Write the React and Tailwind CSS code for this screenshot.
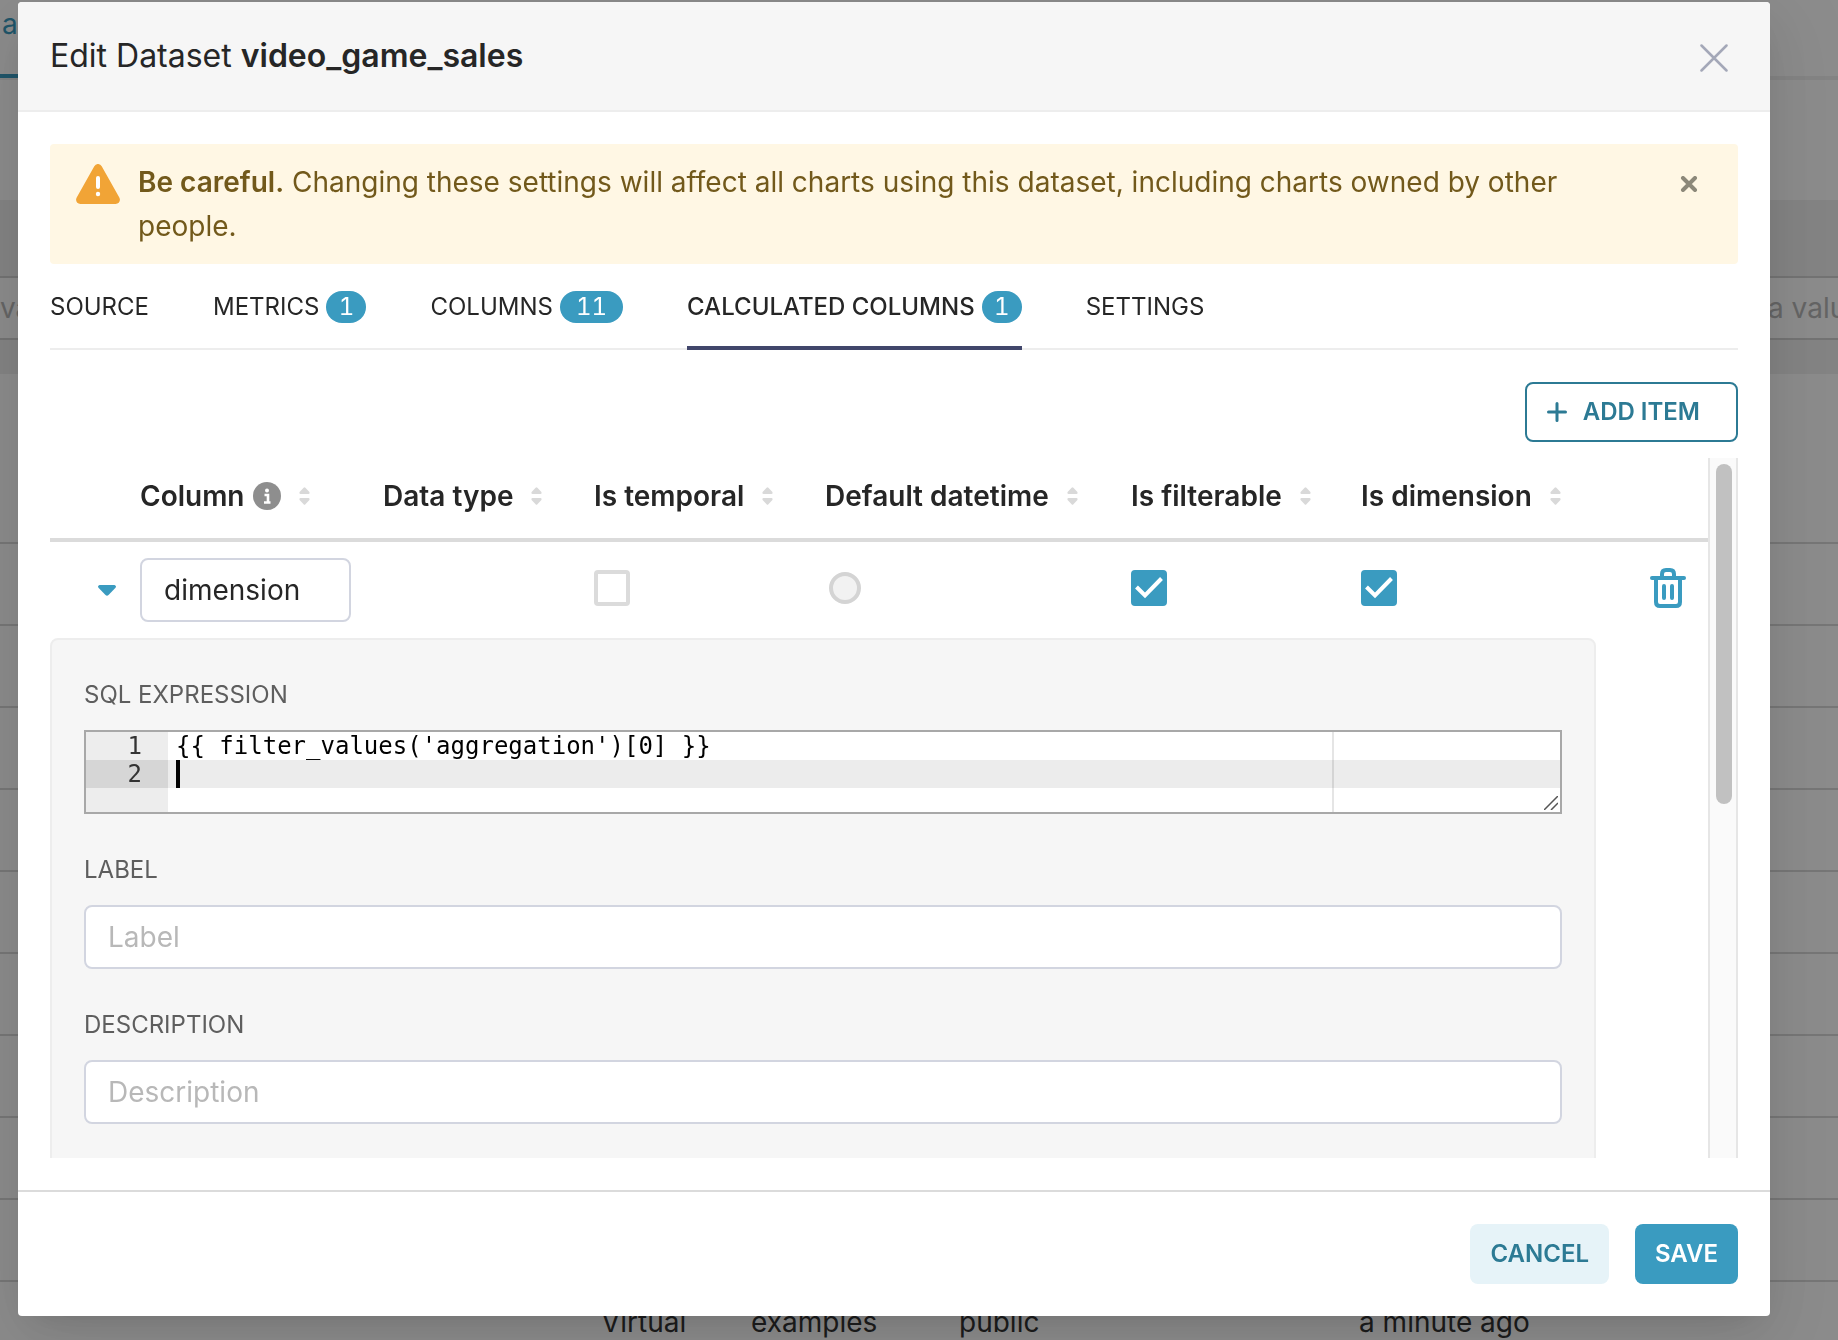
import React, { useState } from 'react';

const TABS = [
  { key: 'source', label: 'SOURCE' },
  { key: 'metrics', label: 'METRICS', count: 1 },
  { key: 'columns', label: 'COLUMNS', count: 11 },
  { key: 'calculated', label: 'CALCULATED COLUMNS', count: 1 },
  { key: 'settings', label: 'SETTINGS' },
];

const HEADERS = [
  { label: 'Column', info: true },
  { label: 'Data type' },
  { label: 'Is temporal' },
  { label: 'Default datetime' },
  { label: 'Is filterable' },
  { label: 'Is dimension' },
];

const SQL = "{{ filter_values('aggregation')[0] }}\n";

function SortIcon() {
  return (
    <svg width="11" height="18" viewBox="0 0 11 18" fill="#d9d9d9" aria-hidden="true">
      <path d="M4.6.7Q5.5-.3 6.4.7L10.4 5Q11 7 9.5 7H1.5Q0 7 .6 5Z" />
      <path d="M4.6 17.3Q5.5 18.3 6.4 17.3L10.4 13Q11 11 9.5 11H1.5Q0 11 .6 13Z" />
    </svg>
  );
}

function InfoIcon() {
  return (
    <svg width="28" height="28" viewBox="0 0 28 28" aria-hidden="true">
      <circle cx="14" cy="14" r="14" fill="#8e8e8e" />
      <circle cx="14" cy="8.5" r="2" fill="#fff" />
      <path d="M11.5 13h3.5v7M11 20.500h6.5" stroke="#fff" strokeWidth="2.6" fill="none" />
    </svg>
  );
}

function WarningIcon() {
  return (
    <svg className="mt-1 shrink-0" width="44" height="40" viewBox="0 0 44 40" aria-hidden="true">
      <path
        d="M18.3 2.200a4.200 4.200 0 0 1 7.400 0l17.600 31.300c1.700 3-.2 6.500-3.700 6.500H4.400C.9 40-1 36.500.7 33.500Z"
        fill="#f1a436"
      />
      <path d="M22 14v9" stroke="#fff" strokeWidth="4" strokeLinecap="round" />
      <circle cx="22" cy="30" r="2.2" fill="#fff" />
    </svg>
  );
}

function TrashIcon() {
  return (
    <svg width="36" height="40" viewBox="0 0 36 40" fill="none" stroke="#3a9bc0" strokeWidth="4" strokeLinecap="round" aria-hidden="true">
      <path d="M2 10h32" />
      <path d="M12 9V6q0-4 4-4h4q4 0 4 4v3" />
      <path d="M6 11v23q0 4 4 4h16q4 0 4-4V11" />
      <path d="M14 18v12M22 18v12" />
    </svg>
  );
}

function Checkbox({ label, checked, onChange }) {
  return (
    <span className="grid w-9">
      <input
        type="checkbox"
        aria-label={label}
        checked={checked}
        onChange={e => onChange(e.target.checked)}
        className="peer col-start-1 row-start-1 size-9 appearance-none rounded-[4px] border-4 border-[#dbdbdb] bg-white checked:border-[#3a9bc0] checked:bg-[#3a9bc0]"
      />
      <svg className="pointer-events-none col-start-1 row-start-1 hidden peer-checked:block" width="36" height="36" viewBox="0 0 36 36" aria-hidden="true">
        <path d="M5.500 17l8.500 8.500L30.500 8.500" fill="none" stroke="#fff" strokeWidth="4" />
      </svg>
    </span>
  );
}

function Field({ id, label, children }) {
  return (
    <div>
      <label htmlFor={id} className="mb-[17px] block text-2xl leading-9 text-[#5e5e5e]">
        {label}
      </label>
      {children}
    </div>
  );
}

function SqlEditor({ id }) {
  const [value, setValue] = useState(SQL);

  return (
    <div className="flex h-[84px] border-2 border-[#a8a8a8] bg-white font-['DejaVu_Sans_Mono',monospace] text-2xl leading-7">
      <div className="w-[82px] shrink-0 bg-[#ededed] text-right text-[#333]">
        <div className="pr-[26px]">1</div>
        <div className="bg-[#d6d6d6] pr-[26px]">2</div>
      </div>
      <div className="relative grid flex-1">
        <div className="col-start-1 row-start-1 pt-7">
          <div className="h-7 bg-[#ececec] pl-2">
            <div className="h-7 w-1 bg-black" />
          </div>
        </div>
        <textarea
          id={id}
          value={value}
          onChange={e => setValue(e.target.value)}
          spellCheck={false}
          className="col-start-1 row-start-1 block h-20 w-full resize-none overflow-hidden bg-transparent pl-2 text-black outline-none"
        />
        {/* print margin */}
        <div className="pointer-events-none absolute inset-y-0 right-[226px] w-0.5 bg-black/10" />
        <svg className="pointer-events-none absolute right-0.5 bottom-0.5" width="14" height="14" viewBox="0 0 14 14" stroke="#555" strokeWidth="1.5" aria-hidden="true">
          <path d="M0 14L14 0M7 14l7-7" />
        </svg>
      </div>
    </div>
  );
}

function PageBehind() {
  return (
    <div className="h-full bg-white text-[28px] text-[#333]">
      <nav className="flex h-20 items-start justify-between border-b-4 border-[#f0f0f0]">
        <a href="#data" className="h-[78px] w-40 border-b-4 border-[#3a9bc0] pt-1 pl-0.5 leading-10 text-[#3a9bc0]">a</a>
      </nav>
      <div className="mt-[120px] h-[174px] bg-[#f0f0f0] pt-[76px]">
        <div className="flex h-16 items-center justify-between overflow-hidden border-y-2 border-[#d2d2d2] bg-white whitespace-nowrap text-[#b8b8b8]">
          <span>value</span>
          <span className="w-[70px] overflow-hidden">a value</span>
        </div>
      </div>
      <div className="h-[170px] border-b-2 border-[#d8d8d8]" />
      {Array.from({ length: 9 }, (_, i) => (
        <div key={i} className="h-[82px] border-b-2 border-[#d8d8d8]" />
      ))}
      <div className="grid h-20 grid-cols-[150px_208px_400px_1fr] items-center pl-[601px] whitespace-nowrap">
        <span>Virtual</span>
        <span>examples</span>
        <span>public</span>
        <span>a minute ago</span>
      </div>
    </div>
  );
}

function ColumnsTable() {
  const [column, setColumn] = useState({
    name: 'dimension',
    temporal: false,
    filterable: true,
    dimension: true,
  });
  const [expanded, setExpanded] = useState(true);

  const update = patch => setColumn(prev => ({ ...prev, ...patch }));

  return (
    <table className="w-full table-fixed text-left">
      <colgroup>
        <col className="w-[74px]" />
        <col className="w-[243px]" />
        <col className="w-[211px]" />
        <col className="w-[231px]" />
        <col className="w-[306px]" />
        <col className="w-[230px]" />
        <col className="w-[251px]" />
        <col className="w-[112px]" />
      </colgroup>
      <thead>
        <tr className="h-[82px] border-b-4 border-[#dbdbdb]">
          <th aria-label="Expand" />
          {HEADERS.map(header => (
            <th key={header.label} className="px-4 pb-1 font-semibold whitespace-nowrap">
              <span className="flex items-center">
                {header.label}
                {header.info && <span className="ml-2"><InfoIcon /></span>}
                <span className="ml-[18px]"><SortIcon /></span>
              </span>
            </th>
          ))}
          <th aria-label="Actions" />
        </tr>
      </thead>
      <tbody>
        <tr className="h-[98px]">
          <td>
            <button
              type="button"
              aria-label="Toggle details"
              onClick={() => setExpanded(!expanded)}
              className="ml-12 block"
            >
              <svg width="18" height="11" viewBox="0 0 18 11" fill="#3a9bc0" aria-hidden="true">
                <path d="M1.500 0h15q2.500 1 .8 3L10.500 10q-1.500 1.500-3 0L.7 3Q-1 1 1.500 0Z" />
              </svg>
            </button>
          </td>
          <td className="px-4">
            <input
              type="text"
              aria-label="Column name"
              value={column.name}
              onChange={e => update({ name: e.target.value })}
              className="block h-16 w-full rounded-lg border-2 border-[#d2d5e0] px-[22px]"
            />
          </td>
          <td />
          <td className="px-4 pb-1">
            <Checkbox label="Is temporal" checked={column.temporal} onChange={v => update({ temporal: v })} />
          </td>
          <td className="px-4 pb-1">
            <input
              type="radio"
              aria-label="Default datetime"
              disabled
              className="ml-1 block size-8 appearance-none rounded-full border-4 border-[#d4d4d4] bg-[#f2f2f2]"
            />
          </td>
          <td className="px-4 pb-1">
            <Checkbox label="Is filterable" checked={column.filterable} onChange={v => update({ filterable: v })} />
          </td>
          <td className="px-4 pb-1">
            <Checkbox label="Is dimension" checked={column.dimension} onChange={v => update({ dimension: v })} />
          </td>
          <td className="pb-1">
            <button type="button" aria-label="Delete item" className="mr-[22px] ml-auto block">
              <TrashIcon />
            </button>
          </td>
        </tr>
        {expanded && (
          <tr>
            <td colSpan={7}>
              <div className="flex h-[640px] flex-col gap-[38px] rounded-lg border-2 border-[#ededed] bg-[#f6f6f6] px-8 pt-[37px]">
                <Field id="sql" label="SQL EXPRESSION">
                  <SqlEditor id="sql" />
                </Field>
                <Field id="label" label="LABEL">
                  <input id="label" type="text" placeholder="Label" className="block h-16 w-full rounded-lg border-2 border-[#d2d5e0] bg-white px-[22px] placeholder:text-[#b8b8b8]" />
                </Field>
                <Field id="description" label="DESCRIPTION">
                  <input id="description" type="text" placeholder="Description" className="block h-16 w-full rounded-lg border-2 border-[#d2d5e0] bg-white px-[22px] placeholder:text-[#b8b8b8]" />
                </Field>
              </div>
            </td>
            <td />
          </tr>
        )}
      </tbody>
    </table>
  );
}

export default function App() {
  const [activeTab, setActiveTab] = useState('calculated');
  const [showWarning, setShowWarning] = useState(true);

  return (
    <div className="h-screen overflow-hidden font-['Inter',sans-serif] [font-optical-sizing:none]">
      <PageBehind />
      <div className="fixed inset-0 flex bg-black/45 pt-0.5 pr-[68px] pb-6 pl-[18px] text-[28px] text-[#262626]">
        <div
          role="dialog"
          aria-labelledby="dialog-title"
          className="flex min-w-0 flex-1 flex-col overflow-hidden rounded-[4px] bg-white shadow-[0_12px_32px_-16px_rgba(0,0,0,0.12),0_18px_56px_rgba(0,0,0,0.08),0_24px_96px_32px_rgba(0,0,0,0.05)]"
        >
          <header className="flex h-[110px] shrink-0 items-center justify-between border-b-2 border-[#ededed] bg-[#f6f6f6] pr-[42px] pl-8">
            <h1 id="dialog-title" className="text-[32px] leading-10">
              Edit Dataset <b className="font-semibold">video_game_sales</b>
            </h1>
            <button type="button" aria-label="Close" className="pt-1">
              <svg width="28" height="28" viewBox="0 0 28 28" stroke="#a4a8b8" strokeWidth="2.5" strokeLinecap="round" aria-hidden="true">
                <path d="M1.500 1.500l25 25M26.500 1.500l-25 25" />
              </svg>
            </button>
          </header>

          <div className="flex min-h-0 flex-1 flex-col p-8">
            {showWarning && (
              <div role="alert" className="flex shrink-0 items-start rounded-[4px] bg-[#fff7e4] py-4 pr-10 pl-[26px] leading-[44px] text-[#72591b]">
                <WarningIcon />
                <p className="ml-[18px] flex-1">
                  <b className="font-semibold">Be careful.</b> Changing these settings will affect all charts using this dataset, including charts owned by other people.
                </p>
                <button type="button" aria-label="Dismiss" onClick={() => setShowWarning(false)} className="mt-4 ml-8">
                  <svg width="18" height="16" viewBox="0 0 18 16" stroke="#8c8879" strokeWidth="4" strokeLinecap="round" aria-hidden="true">
                    <path d="M3 2l12 12M15 2L3 14" />
                  </svg>
                </button>
              </div>
            )}

            <div role="tablist" className="flex shrink-0 gap-16 border-b-2 border-[#ededed] text-2xl">
              {TABS.map(tab => (
                <button
                  key={tab.key}
                  type="button"
                  role="tab"
                  aria-selected={activeTab === tab.key}
                  onClick={() => setActiveTab(tab.key)}
                  className={
                    activeTab === tab.key
                      ? '-mb-0.5 flex h-[86px] items-center gap-[7px] border-b-4 border-[#41466b] pt-1 font-medium'
                      : '-mb-0.5 flex h-[86px] items-center gap-[7px] border-b-4 border-transparent pt-1'
                  }
                >
                  {tab.label}
                  {tab.count && (
                    <span
                      className={
                        tab.count > 9
                          ? 'h-8 rounded-full bg-[#3a9bc0] px-4 leading-8 font-normal text-white tabular-nums'
                          : 'h-8 w-10 rounded-full bg-[#3a9bc0] text-center leading-8 font-normal text-white tabular-nums'
                      }
                    >
                      {tab.count}
                    </span>
                  )}
                </button>
              ))}
            </div>

            <div className="mt-8 mb-4 flex shrink-0 justify-end">
              <button type="button" className="flex h-[60px] items-center gap-4 rounded-lg border-2 border-[#2c7a94] pr-9 pl-5 text-2xl font-semibold text-[#2c7a94]">
                <svg width="20" height="20" viewBox="0 0 20 20" stroke="currentColor" strokeWidth="3" strokeLinecap="round" aria-hidden="true">
                  <path d="M10 1.500v17M1.500 10h17" />
                </svg>
                ADD ITEM
              </button>
            </div>

            <div className="flex min-h-0 flex-1">
              <div className="min-w-0 flex-1 overflow-hidden">
                <ColumnsTable />
              </div>
              <div className="w-[30px] shrink-0 border-x-2 border-[#e6e6e6] bg-[#fafafa] pt-1.5 pr-1 pl-1.5">
                <div className="h-[49%] rounded-full bg-[#c1c1c1]" />
              </div>
            </div>
          </div>

          <footer className="flex shrink-0 justify-end gap-[26px] border-t-2 border-[#dbdbdb] p-8 text-2xl font-semibold">
            <button type="button" className="h-[60px] rounded-lg bg-[#e6f3f8] px-5 text-[#2c7a94]">CANCEL</button>
            <button type="button" className="h-[60px] rounded-lg bg-[#3a9bc0] px-5 text-white">SAVE</button>
          </footer>
        </div>
      </div>
    </div>
  );
}
